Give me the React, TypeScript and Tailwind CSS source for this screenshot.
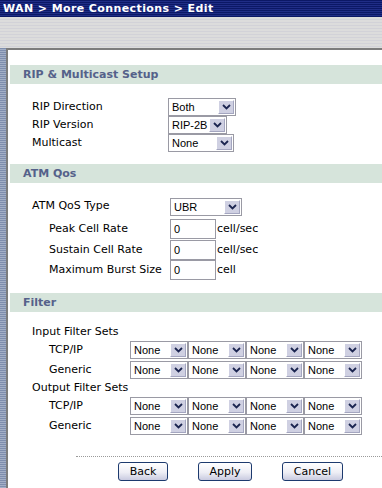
import type { ReactNode } from 'react';

const Chevron = () => (
  <svg width="9" height="6" viewBox="0 0 9 6">
    <path d="M1 1 L4.5 4.5 L8 1" fill="none" stroke="#1b2550" strokeWidth="1.8" />
  </svg>
);

// XP-ish dropdown, drawn as a box so the arrow button matches the picture
const Dropdown = ({ value, width }: { value: string; width: string }) => (
  <div className={`${width} h-[18px] flex items-stretch border border-[#9a9aa4] bg-white`}>
    <span className="flex-1 pl-[3px] leading-[16px] text-[11px] text-black font-['Liberation_Sans',Arial,sans-serif]">
      {value}
    </span>
    <span className="w-[16px] m-[1px] flex items-center justify-center bg-[#cfd0e2] border border-t-white border-l-white border-b-[#a4a6c0] border-r-[#a4a6c0]">
      <Chevron />
    </span>
  </div>
);

const TextBox = ({ value }: { value: string }) => (
  <div className="w-[46px] h-[20px] border border-[#9a9aa4] bg-white pl-[3px] leading-[18px] text-[11px] font-['Liberation_Sans',Arial,sans-serif]">
    {value}
  </div>
);

const SectionHead = ({ children }: { children: ReactNode }) => (
  <div className="h-[19px] bg-[#d6e4db] pl-[13px] leading-[19px] text-[11px] font-bold text-[#55618a]">
    {children}
  </div>
);

const Row = ({ label, indent, h, children }: { label: string; indent?: boolean; h: string; children?: ReactNode }) => (
  <div className={`flex items-center ${h}`}>
    <span className={`${indent ? 'pl-[39px]' : 'pl-[22px]'} w-[160px] shrink-0`}>{label}</span>
    {children}
  </div>
);

const filterRows = ['Input Filter Sets', 'Output Filter Sets'];

const btn =
  "h-[19px] rounded-[3px] border border-[#1d3a6e] bg-[linear-gradient(180deg,#ffffff_0%,#eeeef5_55%,#c9cbe0_100%)] text-[11px] font-['DejaVu_Sans',Verdana,sans-serif] leading-[17px]";

export default function App() {
  return (
    <div className="w-[382px] h-[488px] overflow-hidden bg-[#dcdcdc] text-[11px] text-black font-['DejaVu_Sans',Verdana,sans-serif]">
      {/* title bar */}
      <div className="h-[17px] pl-[3px] leading-[17px] text-[11px] font-bold text-white tracking-[0.4px] bg-[repeating-linear-gradient(180deg,#0b1866_0px,#0b1866_1px,#1f2d86_1px,#1f2d86_2px)]">
        WAN &gt; More Connections &gt; Edit
      </div>
      <div className="h-[31px] bg-[repeating-linear-gradient(180deg,#dcdcdc_0px,#dcdcdc_2px,#d2d2d8_2px,#d2d2d8_3px)]" />

      <div className="flex h-[440px]">
        <div className="w-[6px] shrink-0 bg-[repeating-linear-gradient(180deg,#7f8eae_0px,#7f8eae_1px,#a3afc6_1px,#a3afc6_2px)]" />
        <div className="flex-1 bg-white border-l-2 border-t-2 border-[#7c7c7c] pt-[15px] pl-[2px]">
          <SectionHead>RIP &amp; Multicast Setup</SectionHead>
          <div className="pt-[14px]">
            <Row label="RIP Direction" h="h-[18px]">
              <span className="-ml-[2px]"><Dropdown value="Both" width="w-[68px]" /></span>
            </Row>
            <Row label="RIP Version" h="h-[18px]">
              <span className="-ml-[2px]"><Dropdown value="RIP-2B" width="w-[59px]" /></span>
            </Row>
            <Row label="Multicast" h="h-[18px]">
              <span className="-ml-[2px]"><Dropdown value="None" width="w-[66px]" /></span>
            </Row>
          </div>

          <div className="mt-[12px]">
            <SectionHead>ATM Qos</SectionHead>
          </div>
          <div className="pt-[14px]">
            <Row label="ATM QoS Type" h="h-[19px]">
              <Dropdown value="UBR" width="w-[72px]" />
            </Row>
            <Row label="Peak Cell Rate" indent h="h-[22px] mt-[2px]">
              <span className="flex items-center"><TextBox value="0" /><span className="pl-[1px]">cell/sec</span></span>
            </Row>
            <Row label="Sustain Cell Rate" indent h="h-[20px]">
              <span className="flex items-center"><TextBox value="0" /><span className="pl-[1px]">cell/sec</span></span>
            </Row>
            <Row label="Maximum Burst Size" indent h="h-[20px]">
              <span className="flex items-center"><TextBox value="0" /><span className="pl-[1px]">cell</span></span>
            </Row>
          </div>

          <div className="mt-[13px]">
            <SectionHead>Filter</SectionHead>
          </div>
          <div className="pt-[12px]">
            {filterRows.map((title) => (
              <div key={title}>
                <div className="h-[16px] leading-[16px] pl-[22px]">{title}</div>
                {['TCP/IP', 'Generic'].map((k) => (
                  <div key={k} className="flex items-center h-[20px]">
                    <span className="pl-[39px] w-[120px] shrink-0">{k}</span>
                    {[0, 1, 2, 3].map((i) => (
                      <Dropdown key={i} value="None" width="w-[58px]" />
                    ))}
                  </div>
                ))}
              </div>
            ))}
          </div>

          <div className="ml-[66px] mt-[20px] border-t border-dotted border-[#9a9a9a]" />
          <div className="flex pt-[5px] pl-[108px]">
            <button className={`w-[50px] ${btn}`}>Back</button>
            <button className={`ml-[30px] w-[54px] ${btn}`}>Apply</button>
            <button className={`ml-[30px] w-[61px] ${btn}`}>Cancel</button>
          </div>
        </div>
      </div>
    </div>
  );
}
